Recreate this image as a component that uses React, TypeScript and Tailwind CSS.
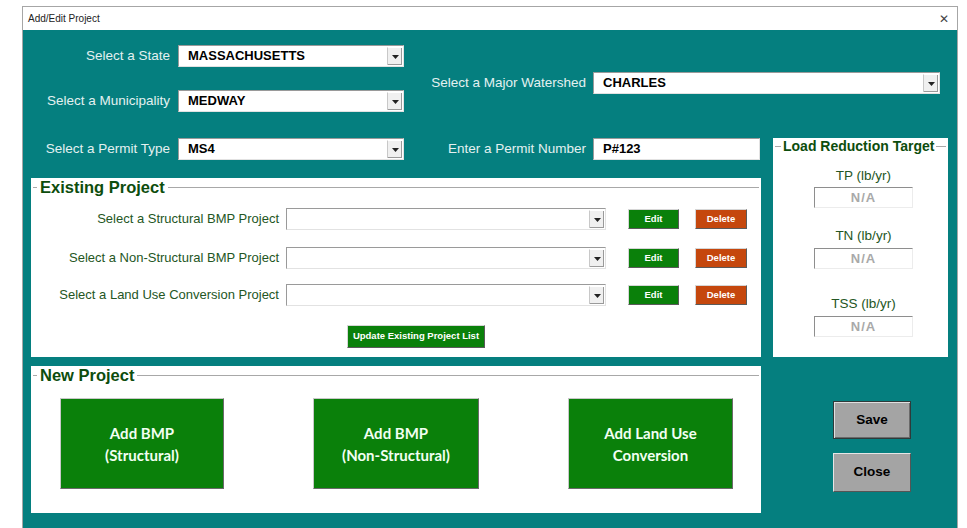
import React from "react";

function Arrow() {
  return (
    <div className="flex h-full w-[15px] flex-col items-center justify-center border-l border-l-[#c8c8c8] border-t border-t-white bg-[#f0f0f0] shadow-[inset_-1px_-1px_0_#9a9a9a]">
      <svg width="7" height="4" viewBox="0 0 7 4">
        <path d="M0 0H7L3.5 4Z" fill="#222" />
      </svg>
    </div>
  );
}

function Combo({ value, className }: { value?: string; className: string }) {
  return (
    <div
      className={
        "flex items-stretch bg-white border border-t-[#9a9a9a] border-l-[#9a9a9a] border-b-[#e2e2e2] border-r-[#e2e2e2] " +
        className
      }
    >
      <div className="flex flex-1 items-center pl-[9px] text-[13px] font-bold text-black">
        {value}
      </div>
      <div className="py-px pr-px">
        <Arrow />
      </div>
    </div>
  );
}

function SmallButton({ label, red }: { label: string; red?: boolean }) {
  return (
    <div
      className={
        "flex h-[20px] items-center justify-center border border-t-[#d6d6d6] border-l-[#d6d6d6] border-b-[#5a5a5a] border-r-[#5a5a5a] text-[9.5px] font-bold text-white " +
        (red ? "w-[52px] bg-[#c5470d]" : "w-[51px] bg-[#0a800a]")
      }
    >
      {label}
    </div>
  );
}

function BigButton({ lines, className }: { lines: string[]; className: string }) {
  return (
    <div
      className={
        "flex h-[91px] flex-col items-center justify-center border border-t-[#c8c8c8] border-l-[#c8c8c8] border-b-[#6a6a6a] border-r-[#6a6a6a] bg-[#0a800a] font-['Lato',sans-serif] text-[15px] font-bold leading-[22px] text-[#f2fff2] " +
        className
      }
    >
      {lines.map((l) => (
        <span key={l}>{l}</span>
      ))}
    </div>
  );
}

function ProjectRow({ label, className }: { label: string; className: string }) {
  return (
    <div className={"flex h-[22px] items-center " + className}>
      <div className="w-[246px] text-right text-[13px] text-[#245624]">{label}</div>
      <Combo className="ml-[7px] h-[22px] w-[320px]" />
      <div className="ml-[22px]">
        <SmallButton label="Edit" />
      </div>
      <div className="ml-[16px]">
        <SmallButton label="Delete" red />
      </div>
    </div>
  );
}

function ReadOnlyBox() {
  return (
    <div className="flex h-[21px] w-[99px] items-center justify-center border border-t-[#8e8e8e] border-l-[#8e8e8e] border-b-[#ececec] border-r-[#ececec] bg-white text-[13px] font-bold tracking-[1px] text-[#a9a9a9]">
      N/A
    </div>
  );
}

export default function App() {
  return (
    <div className="h-[528px] w-[967px] overflow-hidden bg-white font-['Liberation_Sans',Arial,sans-serif]">
      <div className="ml-[22px] mt-[6px] w-[936px] border border-b-0 border-[#a6a6a6]">
        {/* title bar */}
        <div className="flex h-[23px] items-center justify-between bg-white pl-[5px] pr-[8px]">
          <span className="text-[10px] text-[#222]">Add/Edit Project</span>
          <span className="text-[12px] leading-none text-[#444]">✕</span>
        </div>

        {/* form body */}
        <div className="h-[498px] bg-[#057f7f] pl-[8px]">
          {/* state / municipality / watershed */}
          <div className="flex h-[108px]">
            <div className="flex flex-col pt-[15px]">
              <div className="flex h-[22px] items-center">
                <div className="w-[139px] text-right text-[13.5px] text-[#e4f1f1]">Select a State</div>
                <Combo value="MASSACHUSETTS" className="ml-[8px] h-[22px] w-[226px]" />
              </div>
              <div className="mt-[23px] flex h-[22px] items-center">
                <div className="w-[139px] text-right text-[13.5px] text-[#e4f1f1]">Select a Municipality</div>
                <Combo value="MEDWAY" className="ml-[8px] h-[22px] w-[226px]" />
              </div>
            </div>
            <div className="mt-[42px] flex h-[22px] items-center">
              <div className="w-[182px] text-right text-[13.5px] text-[#e4f1f1]">Select a Major Watershed</div>
              <Combo value="CHARLES" className="ml-[7px] h-[22px] w-[347px]" />
            </div>
          </div>

          <div className="flex">
            {/* left: permit row + project frames */}
            <div className="w-[730px]">
              <div className="flex h-[22px] items-center">
                <div className="w-[139px] text-right text-[13.5px] text-[#e4f1f1]">Select a Permit Type</div>
                <Combo value="MS4" className="ml-[8px] h-[22px] w-[226px]" />
                <div className="w-[182px] text-right text-[13.5px] text-[#e4f1f1]">Enter a Permit Number</div>
                <div className="ml-[7px] flex h-[22px] w-[167px] items-center border border-t-[#9a9a9a] border-l-[#9a9a9a] border-b-[#e2e2e2] border-r-[#e2e2e2] bg-white pl-[9px] text-[13px] font-bold">
                  P#123
                </div>
              </div>

              {/* existing project */}
              <div className="mt-[18px] h-[179px] bg-white">
                <fieldset className="mx-[2px] border-t border-[#a8a8a8]">
                  <legend className="ml-[4px] px-[3px] text-[16.5px] font-bold leading-[18px] text-[#0d4d0d]">
                    Existing Project
                  </legend>
                  <ProjectRow label="Select a Structural BMP Project" className="mt-[12px]" />
                  <ProjectRow label="Select a Non-Structural BMP Project" className="mt-[17px]" />
                  <ProjectRow label="Select a Land Use Conversion Project" className="mt-[15px]" />
                  <div className="ml-[314px] mt-[19px] flex h-[23px] w-[138px] items-center justify-center border border-t-[#d6d6d6] border-l-[#d6d6d6] border-b-[#5a5a5a] border-r-[#5a5a5a] bg-[#0a800a] text-[9.5px] font-bold text-white">
                    Update Existing Project List
                  </div>
                </fieldset>
              </div>

              {/* new project */}
              <div className="mt-[9px] h-[147px] bg-white">
                <fieldset className="mx-[2px] border-t border-[#a8a8a8]">
                  <legend className="ml-[4px] px-[3px] text-[16.5px] font-bold leading-[18px] text-[#0d4d0d]">
                    New Project
                  </legend>
                  <div className="ml-[27px] mt-[14px] flex">
                    <BigButton lines={["Add BMP", "(Structural)"]} className="w-[164px]" />
                    <BigButton lines={["Add BMP", "(Non-Structural)"]} className="ml-[89px] w-[166px]" />
                    <BigButton lines={["Add Land Use", "Conversion"]} className="ml-[89px] w-[165px]" />
                  </div>
                </fieldset>
              </div>
            </div>

            {/* right: targets + actions */}
            <div className="ml-[12px] w-[175px]">
              <div className="h-[219px] bg-white">
                <fieldset className="mx-[2px] border-t border-[#a8a8a8]">
                  <legend className="ml-[6px] px-[2px] text-[14px] font-bold leading-[16px] text-[#0d4d0d]">
                    Load Reduction Target
                  </legend>
                  <div className="flex flex-col items-center pl-[6px] text-[13.5px] leading-[16px] text-[#245624]">
                    <div className="mt-[14px]">TP (lb/yr)</div>
                    <div className="mt-[3px]">
                      <ReadOnlyBox />
                    </div>
                    <div className="mt-[20px]">TN (lb/yr)</div>
                    <div className="mt-[4px]">
                      <ReadOnlyBox />
                    </div>
                    <div className="mt-[27px]">TSS (lb/yr)</div>
                    <div className="mt-[4px]">
                      <ReadOnlyBox />
                    </div>
                  </div>
                </fieldset>
              </div>
              <div className="ml-[60px] mt-[44px] flex h-[38px] w-[78px] items-center justify-center border border-[#2e3a3a] bg-[#a4a4a4] text-[13.5px] font-bold text-black shadow-[inset_1px_1px_0_#e0e0e0,inset_-1px_-1px_0_#6a6a6a]">
                Save
              </div>
              <div className="ml-[60px] mt-[14px] flex h-[39px] w-[78px] items-center justify-center border border-t-[#e6e6e6] border-l-[#e6e6e6] border-b-[#555] border-r-[#555] bg-[#a4a4a4] text-[13.5px] font-bold text-black">
                Close
              </div>
            </div>
          </div>
        </div>
      </div>
    </div>
  );
}
